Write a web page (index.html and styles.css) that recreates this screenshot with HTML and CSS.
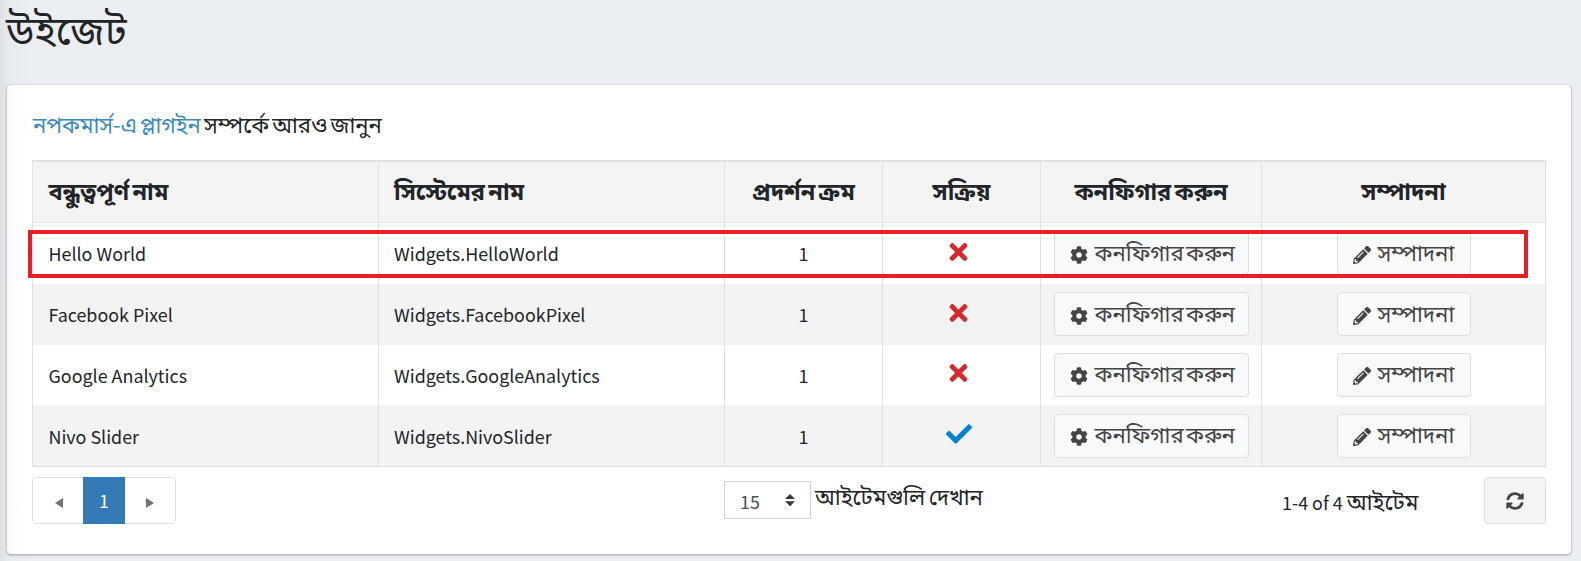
FILE: index.html
```
<!DOCTYPE html>
<html lang="bn">
<head>
<meta charset="utf-8">
<title>উইজেট</title>
<link rel="stylesheet" href="styles.css">
</head>
<body>
<svg class="defs" aria-hidden="true">
  <symbol id="times" viewBox="0 0 352 512"><path d="M242.700 256l100.100-100.100c12.300-12.300 12.300-32.200 0-44.500l-22.200-22.200c-12.300-12.300-32.200-12.300-44.500 0L176 189.300 75.900 89.200c-12.300-12.300-32.200-12.300-44.500 0L9.200 111.400c-12.300 12.300-12.300 32.200 0 44.500L109.300 256 9.200 356.100c-12.300 12.300-12.300 32.200 0 44.500l22.200 22.200c12.300 12.300 32.200 12.300 44.500 0L176 322.700l100.100 100.100c12.300 12.300 32.200 12.300 44.500 0l22.200-22.200c12.300-12.300 12.300-32.200 0-44.500L242.700 256z"/></symbol>
  <symbol id="check" viewBox="0 0 512 512"><path d="M173.900 439.400l-166.400-166.400c-10-10-10-26.200 0-36.200l36.200-36.200c10-10 26.200-10 36.200 0L192 312.700 432.100 72.600c10-10 26.200-10 36.200 0l36.200 36.200c10 10 10 26.200 0 36.200l-294.400 294.400c-10 10-26.200 10-36.200 0z"/></symbol>
  <symbol id="cog" viewBox="0 0 512 512"><path d="M487.400 315.700l-42.600-24.600c4.300-23.200 4.300-47 0-70.200l42.600-24.600c4.900-2.800 7.100-8.600 5.500-14-11.100-35.600-30-67.800-54.700-94.600-3.800-4.100-10-5.100-14.800-2.300L380.800 110c-17.900-15.400-38.500-27.300-60.800-35.100V25.800c0-5.600-3.900-10.500-9.400-11.700-36.700-8.200-74.300-7.800-109.200 0-5.500 1.200-9.400 6.100-9.400 11.700V75c-22.200 7.900-42.800 19.800-60.800 35.100L88.700 85.500c-4.900-2.800-11-1.900-14.800 2.300-24.700 26.700-43.600 58.900-54.700 94.600-1.700 5.400.6 11.200 5.500 14L67.300 221c-4.300 23.200-4.300 47 0 70.200l-42.600 24.600c-4.900 2.800-7.100 8.600-5.500 14 11.100 35.600 30 67.800 54.700 94.600 3.800 4.100 10 5.100 14.800 2.300l42.600-24.600c17.900 15.400 38.500 27.300 60.800 35.100v49.200c0 5.600 3.900 10.500 9.400 11.700 36.700 8.200 74.300 7.800 109.200 0 5.500-1.200 9.400-6.100 9.400-11.700v-49.200c22.200-7.900 42.800-19.800 60.800-35.100l42.600 24.600c4.900 2.800 11 1.900 14.800-2.300 24.700-26.700 43.600-58.900 54.700-94.600 1.500-5.500-.7-11.300-5.600-14.100zM256 336c-44.100 0-80-35.900-80-80s35.900-80 80-80 80 35.900 80 80-35.900 80-80 80z"/></symbol>
  <symbol id="pencil" viewBox="0 0 512 512"><path d="M497.900 142.100l-46.100 46.100c-4.700 4.700-12.300 4.700-17 0l-111-111c-4.700-4.700-4.700-12.300 0-17l46.100-46.100c18.700-18.700 49.100-18.700 67.900 0l60.100 60.100c18.800 18.700 18.800 49.100 0 67.900zM284.200 99.800L21.600 362.400.400 483.900c-2.900 16.400 11.400 30.600 27.800 27.800l121.500-21.300 262.600-262.600c4.700-4.700 4.700-12.300 0-17l-111-111c-4.800-4.700-12.400-4.700-17.100 0zM124.100 339.900c-5.500-5.500-5.500-14.300 0-19.800l154-154c5.500-5.500 14.300-5.500 19.800 0s5.500 14.300 0 19.800l-154 154c-5.500 5.500-14.300 5.500-19.800 0zM88 424h48v36.300l-64.500 11.300-31.100-31.100L51.700 376H88v48z"/></symbol>
  <symbol id="sync" viewBox="0 0 512 512"><path d="M370.700 133.300C339.500 104 298.900 88 255.800 88c-77.500.100-144.300 53.200-162.800 126.900-1.300 5.400-6.100 9.200-11.700 9.200H24.100c-7.500 0-13.200-6.800-11.800-14.200C33.900 94.900 134.800 8 256 8c66.400 0 126.800 26.100 171.300 68.700L463 41c15.100-15.100 41-4.400 41 17v134c0 13.300-10.700 24-24 24H346c-21.400 0-32.100-25.900-17-41l41.700-41.700zM32 296h134c21.400 0 32.100 25.900 17 41l-41.800 41.800c31.300 29.300 71.800 45.300 114.900 45.300 77.400-.1 144.300-53.100 162.800-126.800 1.300-5.400 6.100-9.200 11.700-9.200h57.300c7.500 0 13.200 6.800 11.800 14.200C478.100 417.100 377.200 504 256 504c-66.400 0-126.800-26.100-171.300-68.700L49 471c-15.100 15.100-41 4.400-41-17V320c0-13.300 10.700-24 24-24z"/></symbol>
</svg>
<h1 class="title">উইজেট</h1>
<main class="card">
  <p class="intro"><a class="link" href="#">নপকমার্স-এ প্লাগইন</a> সম্পর্কে আরও জানুন</p>
  <div class="table-wrap">
  <div class="grid head">
    <div>বন্ধুত্বপূর্ণ নাম</div><div>সিস্টেমের নাম</div><div class="c">প্রদর্শন ক্রম</div><div class="c">সক্রিয়</div><div class="c">কনফিগার করুন</div><div class="c">সম্পাদনা</div>
  </div>
  <div class="grid row">
    <div>Hello World</div><div>Widgets.HelloWorld</div><div class="c">1</div><div class="c"><svg class="no"><use href="#times"/></svg></div>
    <div class="c"><button class="btn conf"><svg><use href="#cog"/></svg><span>কনফিগার করুন</span></button></div><div class="c"><button class="btn edit"><svg><use href="#pencil"/></svg><span>সম্পাদনা</span></button></div>
  </div>
  <div class="grid row alt">
    <div>Facebook Pixel</div><div>Widgets.FacebookPixel</div><div class="c">1</div><div class="c"><svg class="no"><use href="#times"/></svg></div>
    <div class="c"><button class="btn conf"><svg><use href="#cog"/></svg><span>কনফিগার করুন</span></button></div><div class="c"><button class="btn edit"><svg><use href="#pencil"/></svg><span>সম্পাদনা</span></button></div>
  </div>
  <div class="grid row">
    <div>Google Analytics</div><div>Widgets.GoogleAnalytics</div><div class="c">1</div><div class="c"><svg class="no"><use href="#times"/></svg></div>
    <div class="c"><button class="btn conf"><svg><use href="#cog"/></svg><span>কনফিগার করুন</span></button></div><div class="c"><button class="btn edit"><svg><use href="#pencil"/></svg><span>সম্পাদনা</span></button></div>
  </div>
  <div class="grid row alt">
    <div>Nivo Slider</div><div>Widgets.NivoSlider</div><div class="c">1</div><div class="c"><svg class="yes"><use href="#check"/></svg></div>
    <div class="c"><button class="btn conf"><svg><use href="#cog"/></svg><span>কনফিগার করুন</span></button></div><div class="c"><button class="btn edit"><svg><use href="#pencil"/></svg><span>সম্পাদনা</span></button></div>
  </div>
  <div class="marker"></div>
  </div>
  <footer class="foot">
    <nav class="pager"><a class="arrow"><svg viewBox="0 0 8 10"><path d="M8 0v10L0 5z"/></svg></a><a class="cur">1</a><a class="arrow"><svg viewBox="0 0 8 10"><path d="M0 0v10l8-5z"/></svg></a></nav>
    <div class="size"><div class="select"><span>15</span><svg viewBox="0 0 10 12"><path d="M0 5L5 0l5 5zM0 7.300l5 5 5-5z"/></svg></div><span class="show">আইটেমগুলি দেখান</span></div>
    <div class="info">1-4 of 4 <span>আইটেম</span></div>
    <button class="refresh"><svg><use href="#sync"/></svg></button>
  </footer>
</main>
<div class="edge"></div>
</body>
</html>
```
FILE: styles.css
```
* { box-sizing: border-box; }
body { margin: 0; height: 561px; overflow: hidden; position: relative; background: #ebeef3; color: #212529; font: 17.9px/28px "Noto Sans CJK SC", "Noto Sans Bengali", sans-serif; }
svg { fill: currentColor; display: block; }
.defs { position: absolute; width: 0; height: 0; }
.title { margin: 0; height: 85px; padding: 6px 0 0 6px; font-size: 40px; line-height: 44px; font-weight: 400; }
.card { margin-left: 7px; width: 1564px; height: 469px; padding: 24px 25px 0; background: #fff; border-radius: 4px; box-shadow: 0 0 1px rgba(0,0,0,.25), 0 1px 3px rgba(0,0,0,.3); }
.intro { margin: 0; height: 51px; padding-left: 1px; line-height: 28px; font-size: 22.1px; word-spacing: -1.8px; }
.link { color: #3c8dbc; text-decoration: none; }
.table-wrap { position: relative; width: 1514px; height: 307px; border: 1px solid #dee2e6; border-top: 2px solid #e0e1e2; border-bottom-color: #dcdfe2; }
.grid { display: grid; grid-template-columns: 346px 346px 158px 158px 221px 1fr; height: 60.75px; }
.grid > div { display: flex; align-items: center; padding: 0 0 0 15px; border-right: 1px solid #dee2e6; white-space: nowrap; }
.grid > div:last-child { border-right: 0; }
.grid > div:first-child { padding-left: 15.500px; }
.grid > .c { justify-content: center; padding-left: 0; }
.head { height: 61px; background: #f4f4f4; border-bottom: 1px solid #dee2e6; font-weight: 700; font-size: 23.5px; word-spacing: -2px; }
.grid.head > div { padding-top: 0; padding-bottom: 5px; }
.alt { background: #f3f3f3; }
.no, .yes { width: 19px; height: 26px; margin: -3px 6px 0 0; color: #d32a2d; }
.yes { width: 26px; color: #0780d0; }
.btn { display: flex; align-items: center; height: 44px; padding: 0 0 0 15px; gap: 7px; border: 1px solid #ddd; border-radius: 4px; background: #f8f9fa; color: #444; font: 22.200px/28px "Noto Sans CJK SC", "Noto Sans Bengali", sans-serif; word-spacing: -2.5px; white-space: nowrap; }
.btn svg { width: 18px; height: 18px; flex: none; margin-top: 3px; }
.btn span { padding-bottom: 5px; }
.conf { width: 195px; }
.edit { width: 134px; }
.marker { position: absolute; left: -5px; top: 68px; width: 1500px; height: 48px; border: 4px solid #ed1c24; }
.foot { display: grid; grid-template-columns: 692px 559px 1fr 62px; padding-top: 10px; }
.pager { display: flex; width: 144px; height: 47px; border: 1px solid #dee2e6; border-radius: 4px; }
.pager a { flex: 1; display: flex; align-items: center; justify-content: center; }
.pager svg { width: 8px; height: 10px; color: #6c757d; margin: 5px 0 0 1px; }
.pager .cur { flex: 0 0 42px; margin: -1px 0; padding-bottom: 1px; background: #337ab7; color: #fff; }
.pager a:last-child svg { margin-left: -1px; }
.size { display: flex; align-items: flex-start; }
.select { display: flex; align-items: center; justify-content: space-between; width: 87px; height: 38px; margin-top: 4px; padding: 1px 15px 0 15px; border: 1px solid #ced4da; color: #495057; }
.select svg { width: 10px; height: 12px; margin-top: -1px; color: #343a40; }
.show { font-size: 22.200px; word-spacing: -1.500px; margin: 4px 0 0 4px; }
.info { padding-top: 9px; margin-left: -1px; white-space: nowrap; }
.info span { font-size: 22.3px; }
.refresh { display: flex; align-items: center; justify-content: center; height: 47px; padding: 0; border: 1px solid #ddd; border-radius: 4px; background: #f4f4f4; color: #444; }
.refresh svg { width: 18px; height: 18px; }
.edge { position: absolute; left: 0; top: 0; width: 32px; height: 561px; background: linear-gradient(90deg, rgba(0,0,0,.06), rgba(0,0,0,.015) 10px, transparent); }
```
